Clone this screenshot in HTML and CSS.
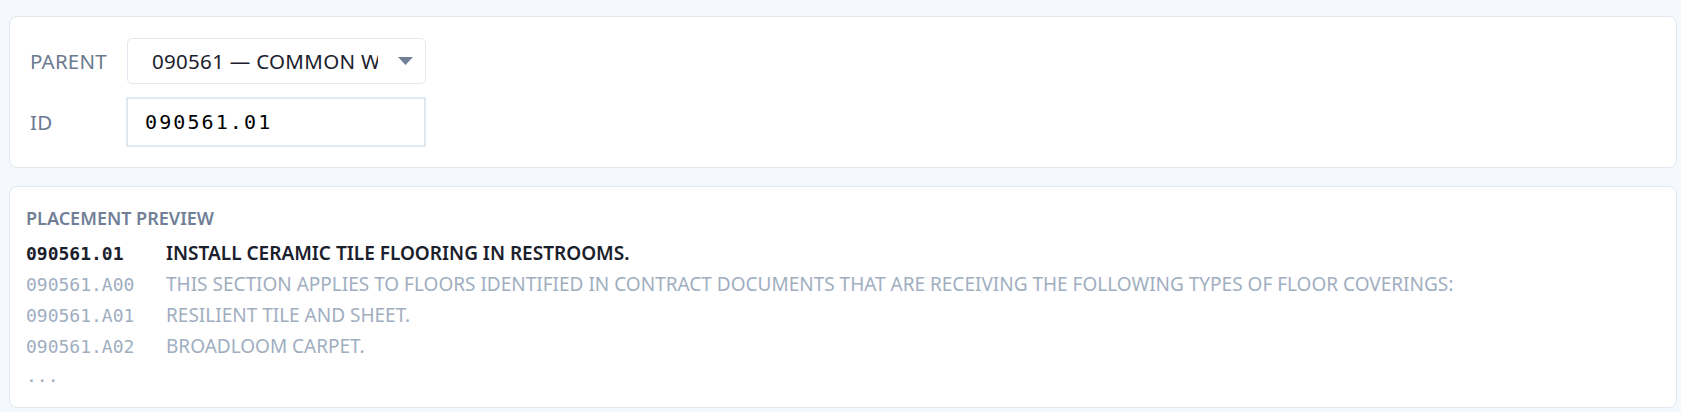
FILE: index.html
```html
<!DOCTYPE html>
<html>
<head>
<meta charset="utf-8">
<link rel="stylesheet" href="styles.css">
</head>
<body>
<div class="page">
  <section class="card form-card">
    <div class="field">
      <label class="field-label">PARENT</label>
      <div class="select">
        <span class="select-text">090561 — COMMON WORK RESULTS FOR FLOORING</span>
        <svg class="caret" width="15" height="8" viewBox="0 0 15 8"><path d="M0 0 H15 L7.5 8 Z" fill="#718096"/></svg>
      </div>
    </div>
    <div class="field">
      <label class="field-label">ID</label>
      <div class="input">090561.01</div>
    </div>
  </section>
  <section class="card preview-card">
    <div class="preview-title">PLACEMENT PREVIEW</div>
    <div class="rows">
      <div class="row current"><span class="rid">090561.01</span><span class="rtext">INSTALL CERAMIC TILE FLOORING IN RESTROOMS.</span></div>
      <div class="row"><span class="rid">090561.A00</span><span class="rtext">THIS SECTION APPLIES TO FLOORS IDENTIFIED IN CONTRACT DOCUMENTS THAT ARE RECEIVING THE FOLLOWING TYPES OF FLOOR COVERINGS:</span></div>
      <div class="row"><span class="rid">090561.A01</span><span class="rtext">RESILIENT TILE AND SHEET.</span></div>
      <div class="row"><span class="rid">090561.A02</span><span class="rtext">BROADLOOM CARPET.</span></div>
      <div class="row more"><span class="rid">...</span></div>
    </div>
  </section>
</div>
</body>
</html>
```
FILE: styles.css
```css
html, body {
  margin: 0;
  padding: 0;
  background: #f5f8fc;
}
body {
  font-family: "Noto Sans", "Open Sans", sans-serif;
  color: #1a202c;
}
.page {
  display: flex;
  flex-direction: column;
  gap: 18px;
  padding: 16px 4px 0 9px;
}
.card {
  background: #ffffff;
  border: 1px solid #e2e8f0;
  border-radius: 8px;
}
.form-card {
  padding: 21px 20px 20px 20px;
  display: flex;
  flex-direction: column;
  gap: 13px;
}
.field {
  display: flex;
  align-items: center;
}
.field-label {
  width: 96px;
  font-size: 20.5px;
  color: #6b7a90;
  letter-spacing: 0.2px;
}
.select {
  box-sizing: border-box;
  width: 299px;
  height: 46px;
  border: 1px solid #e2e8f0;
  border-radius: 5px;
  display: flex;
  align-items: center;
  padding: 0 12px 0 24px;
  gap: 20px;
  overflow: hidden;
  margin-left: 1px;
}
.select-text {
  flex: 1;
  overflow: hidden;
  white-space: nowrap;
  font-size: 20.5px;
  letter-spacing: 0.3px;
  color: #1a202c;
}
.caret {
  flex: none;
}
.input {
  box-sizing: border-box;
  width: 300px;
  height: 50px;
  border: 2px solid #e2e8f0;
  display: flex;
  align-items: center;
  padding-left: 17px;
  font-family: "DejaVu Sans Mono", monospace;
  font-size: 20px;
  letter-spacing: 2.1px;
  color: #000;
}
.preview-card {
  padding: 19px 16px 17px 16px;
}
.preview-title {
  font-size: 18px;
  font-weight: 600;
  color: #718096;
  line-height: 24px;
  margin-bottom: 8px;
}
.rows {
  display: flex;
  flex-direction: column;
}
.row {
  display: flex;
  align-items: baseline;
  line-height: 30px;
  color: #a0aec0;
}
.rid {
  width: 140px;
  flex: none;
  font-family: "DejaVu Sans Mono", monospace;
  font-size: 18px;
}
.rtext {
  font-size: 19px;
  white-space: nowrap;
}
.row.current {
  color: #1a202c;
}
.row.current .rid {
  font-weight: 700;
}
.row.current .rtext {
  font-weight: 600;
}
.row.more {
  line-height: 28px;
}
```
